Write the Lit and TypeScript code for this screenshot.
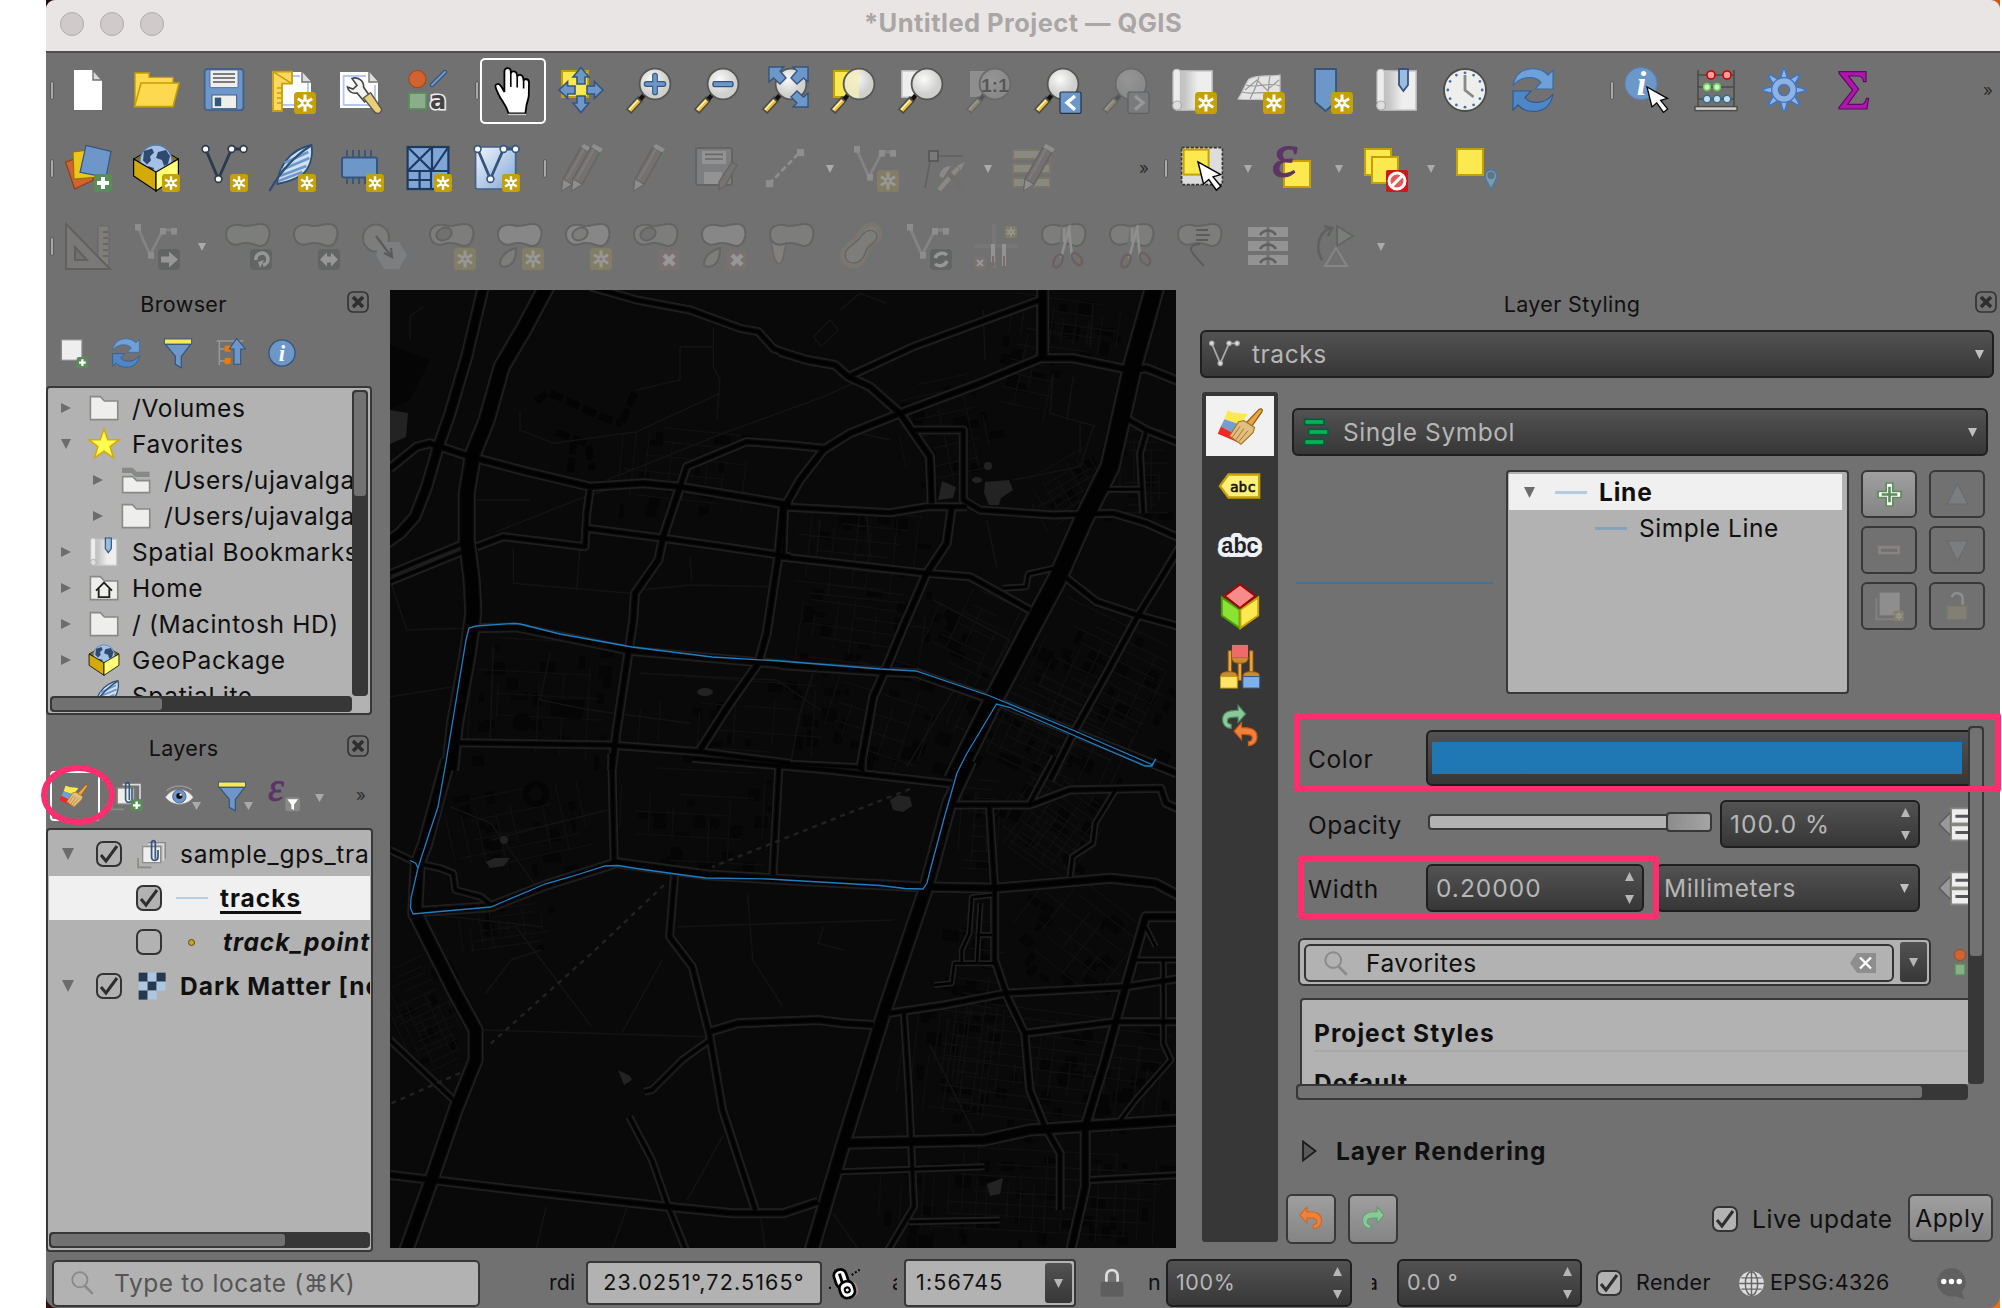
import { LitElement, html, css, svg } from "lit";
import { customElement } from "lit/decorators.js";
import { classMap } from "lit/directives/class-map.js";

/* ---------- icon parts, drawn on a 24 unit grid ---------- */

const star = (x = 13, s = 11) => svg`
  <g transform="translate(${x} ${x}) scale(${s / 11})">
    <rect width="11" height="11" rx="1.8" fill="#c4a000"/>
    <path d="M5.5 1.300v8.400M1.900 3.400l7.200 4.200M9.100 3.400L1.900 7.600" stroke="#fff" stroke-width="1.500"/>
    <circle cx="5.500" cy="5.500" r="1.900" fill="#fff"/><circle cx="5.500" cy="5.500" r=".8" fill="#c4a000"/>
  </g>`;
const plusBadge = svg`<rect x="15" y="15" width="9" height="9" rx="1.800" fill="#5a8c5a"/><path d="M19.500 16.500v6M16.500 19.500h6" stroke="#fff" stroke-width="2"/>`;
const greyBadge = (inner: unknown) => svg`<rect x="13" y="13.500" width="11" height="10.500" rx="2" fill="#3c4248"/>${inner}`;
const redBadge = svg`<rect x="13.500" y="14" width="10" height="10" rx="1.500" fill="#b06a6a"/><path d="M16 16.500l5 5M21 16.500l-5 5" stroke="#fff" stroke-width="2.200"/>`;
const lens = svg`
  <path d="M1.800 22.800l6-6.600" stroke="#4a4a46" stroke-width="3.600"/>
  <path d="M2.300 22.200l4.600-5" stroke="#fcc12f" stroke-width="2.100"/>
  <path d="M2 21.900l4.400-4.800" stroke="#fff" stroke-width=".6"/>
  <path d="M7.600 16.600l2.600-2.800" stroke="#111" stroke-width="2.200"/>
  <circle cx="15" cy="9" r="7.700" fill="url(#lens)" stroke="#555753" stroke-width=".9"/>`;
const globe = svg`
  <circle cx="12" cy="8.600" r="8" fill="#a4c2e6" stroke="#5a80ae" stroke-width=".6"/>
  <path d="M6 3.500l4-1.300 1 2-2 2 .5 2-2 2-2-2zM13 4l4-1 2 3-1 4-2 1-1-3-3-1zM8 11l3 1-1 3z" fill="#2f4a6e"/>`;
const blob = (fill = "#9aa590") => svg`<path d="M1 6C1 2 5 1 8 1.500c4 1.500 7-.8 11-.5C23 1.500 23.500 6 22 9c-1 3-3.500 3.500-6 2.500-3-1.200-5-1.500-8-.5C4 12.200 1 10 1 6z" fill="${fill}" stroke="#3e433c" stroke-width="1"/>`;
const vline = (c: string, d = "#fff") => svg`
  <path d="M2.800 2.500l6.400 15 6.600-15h6" fill="none" stroke="${c}" stroke-width="1.400"/>
  ${[[2.800, 2.500], [9.200, 17.500], [15.800, 2.500], [21.800, 2.500]].map(([x, y]) => svg`<circle cx="${x}" cy="${y}" r="1.700" fill="${d}" stroke="${c}" stroke-width=".8"/>`)}`;
const vsq = svg`
  <path d="M3 3l6 13.500 6.500-12.500h6" fill="none" stroke="#b4bbad" stroke-width="1.400"/>
  ${[[1.500, 1], [8, 15], [14, 3], [19.500, 3]].map(([x, y]) => svg`<rect x="${x}" y="${y}" width="3" height="3.300" fill="#dadada"/>`)}`;
const pencil = (x: number) => svg`<g transform="translate(${x} 0)"><path d="M3 17.500L12 1.500l4.500 2.500-9 16.200L2.500 23z" fill="#857268" stroke="#4e4740" stroke-width=".8"/><path d="M5 17.500l8.500-15" stroke="#a89a8c" stroke-width="1"/><path d="M3 17.500l4.500 2.700L2.300 23.500z" fill="#ddd" stroke="#444" stroke-width=".5"/><path d="M12 1.500L13.500 0l4.500 2.500-1.500 1.800z" fill="#ddd"/></g>`;
const scroll = svg`
  <path d="M5 2.500h16.500v19.500H4z" fill="url(#paper)" stroke="#c8c8c8" stroke-width=".8"/>
  <path d="M2 3.500C2 1 5.700 1 5.700 3.500v14.500H2z" fill="#ececec" stroke="#c0c0c0" stroke-width=".6"/>
  <ellipse cx="4" cy="19.800" rx="2.200" ry="2.300" fill="#dedede" stroke="#aaa" stroke-width=".6"/>`;
const page = svg`<path d="M5 2h9.500l4.500 5v15H5z" fill="#fff"/>`;
const scissors = svg`<path d="M12 3v7M15 1.500L10.500 18M14.500 2.500L16 18" stroke="#ddd" stroke-width="1.300"/><ellipse cx="9" cy="19.500" rx="2" ry="3.500" transform="rotate(25 9 19.500)" fill="none" stroke="#7e2e2e" stroke-width="1.200"/><ellipse cx="18.500" cy="18.500" rx="2" ry="3.500" transform="rotate(-35 18.500 18.500)" fill="none" stroke="#7e2e2e" stroke-width="1.200"/>`;
const pointer = (x: number, y: number, k = 1) => svg`<path transform="translate(${x} ${y}) scale(${k})" d="M0 0l2.700 10.800 2.600-2.200 3.700 5.200 2.200-1.900-3.800-4.600 3.700-1.100z" fill="#fff" stroke="#000" stroke-width=".7"/>`;
const brushPaint = svg`
  <path d="M5.500 3.800C9 6 12 4.800 16 6l-4 5.200-8.200-2.700z" fill="#fce94f"/>
  <path d="M3.800 8.500l8.200 2.700-3.500 4.500L2 12.300z" fill="#729fcf"/>
  <path d="M2 12.300l6.500 3.400L12 21 .4 16z" fill="#ef2929"/>
  <path d="M15.300 10.300L21.800 3.500c1-1 2.300-.2 1.700 1L18 12.300z" fill="#e9a648" stroke="#8f5902" stroke-width=".6"/>
  <path d="M11.300 9.800l2.800-.6 5.500 3.600-.8 2.700-6.300 6-6-4.300z" fill="#e0bd80" stroke="#a8741f" stroke-width=".6"/>
  <path d="M12 12.200l-4 5.600M14 13.400l-4 5.600M16.200 14.500l-4.700 5.500" stroke="#a8741f" stroke-width=".5"/>`;
const undoArrow = svg`<path d="M1.500 9.500L8 2v4.500c8-.5 13.500 1.500 13.500 8 0 4.500-3 7.500-7.500 7.500v-3.500c2 0 3.300-1.500 3.300-3.300 0-2.500-3.300-3.200-9.300-2.900V17z"/>`;
const cubeBox = svg`
  <path d="M.8 7.500L12 1l11.200 6.500L12 14z" fill="#8a6d08" stroke="#000" stroke-width=".5"/>
  ${globe}
  <path d="M.8 7.500L12 14v9.500L.8 16z" fill="#d4a90a" stroke="#000" stroke-width=".6"/>
  <path d="M23.200 7.500L12 14v9.500L23.200 16z" fill="#ffff78" stroke="#000" stroke-width=".6"/>`;
const feather = svg`
  <path d="M22.500 .5c1 5-.5 12-5 15-3 2-7 3.500-12 4.500C6 12 11 3 22.500.5z" fill="#cfe0f4" stroke="#2d4d74" stroke-width=".9"/>
  <path d="M21 4L9 9.500M21.500 7L7.500 13M20 11L6.800 16M18 14L6 18.500" stroke="#6d97c8" stroke-width="1.300"/>
  <path d="M22 1C14 6 7 14 1.500 23.500" fill="none" stroke="#2d4d74" stroke-width="1.100"/>`;
const funnel = svg`<path d="M2.500 5.500h19l-7 9V23l-4.500-2.500v-6z" fill="#6d97c8" stroke="#34557e" stroke-width=".9"/><rect x="1.800" y="1.500" width="20.400" height="3.800" fill="#fce94f" stroke="#34557e" stroke-width=".7"/>`;
const folderPath = "M1.800 3.500h7.500l3 3.200h10v14H1.800z";

const ICONS: Record<string, unknown> = {
  new: svg`${page}<path d="M14.500 2v5H19z" fill="#d8d8d8" stroke="#717171" stroke-width=".7"/>`,
  open: svg`<path d="M1.500 20V3.500h7v2.200h12V9" fill="#fcd94f" stroke="#c4a000" stroke-width=".7"/><path d="M1.300 20.300L4.500 8.500h19L20.500 20.300z" fill="#fcd94f" stroke="#c4a000" stroke-width=".8"/>`,
  save: svg`<rect x="2.300" y="1.500" width="19.400" height="20.600" rx="1.500" fill="#6d97c8" stroke="#41608a" stroke-width=".9"/><rect x="5" y="2" width="14" height="8.800" rx=".6" fill="#eeeeec" stroke="#41608a" stroke-width=".4"/><path d="M6.500 4h11M6.500 6h11M6.500 8h11" stroke="#555" stroke-width=".7"/><rect x="6" y="14.500" width="12.300" height="6.800" fill="#eeeeec" stroke="#41608a" stroke-width=".5"/><rect x="7.400" y="15.800" width="3.200" height="4.300" fill="#34557e"/>`,
  layout: svg`<path d="M2 3h15l4.500 5v13H2z" fill="#fff"/><path d="M17 3v5h4.500" fill="#ddd" stroke="#717171" stroke-width=".7"/><path d="M3.500 5H16M20 8.500V19.500H6" stroke="#b3c7ef" fill="none" stroke-width=".9"/><path d="M2.500 2.800H12v6H7V22.500H2.500z" fill="#fcd862" stroke="#c4a000" stroke-width=".9"/><path d="M2.500 2.800l9.500 6M7 11H4.500M7 13.500H4.500M7 16H4.500M7 18.500H4.500" stroke="#c4a000" stroke-width=".7"/>${star()}`,
  wrench: svg`<path d="M2 3h14.500l4.500 5v13H2z" fill="#fff"/><path d="M16.500 3v5H21" fill="#ddd" stroke="#717171" stroke-width=".7"/><path d="M15 5H3.800v14.500h15.700V9.500" stroke="#b3c7ef" fill="none" stroke-width=".9"/><path d="M8 6.200c3-.9 6 1 5.800 4.400l3.500 5-3 2.400-3.800-4.500C8 14 6 12.500 5.700 10.500l2.800 1 2-1.800z" fill="#f3f3f1" stroke="#444" stroke-width=".8"/><path d="M13.700 16l3.600-2.600 5.400 8c.6 1.700-1.800 3-3.200 1.800z" fill="#e9cf75" stroke="#555" stroke-width=".7"/>`,
  style: svg`<circle cx="6.700" cy="6.500" r="4.300" fill="#d0632f" stroke="#a34a1d" stroke-width=".6"/><path d="M14 9.500L20.500 3" stroke="#2d4d74" stroke-width="2.200" stroke-linecap="round"/><path d="M14 9.500L20.500 3" stroke="#6d97c8" stroke-width="1.200" stroke-linecap="round"/><rect x="2.500" y="13.500" width="8.600" height="8" fill="#8aae8a" stroke="#5a8c5a" stroke-width=".9"/><text x="13" y="21.500" font-family="DejaVu Sans" font-weight="bold" font-size="12" fill="#444" stroke="#eee" stroke-width="1.600" paint-order="stroke">a</text>`,
  hand: svg`<path d="M9.300.6c1 0 1.600.7 1.600 1.600v1c.2-.8.8-1 1.400-1 .9 0 1.500.6 1.700 1.600l.1 1c.3-.7.8-.9 1.300-.9.9 0 1.500.6 1.700 1.600l.2 1.300c.2-.6.7-.8 1.200-.8.9.1 1.500.8 1.500 1.800l-.1 6.500c-.2 2-.7 3-1.100 4.500l-.6 4.400H9.800c-1-3.500-2.300-5-4-7.600C4.600 13.400 3.300 11 3.200 9.500c0-1.100 1.700-1.400 2.400-.4.9 1 1.500 2.300 2.100 3.400V2.200C7.700 1.200 8.400.6 9.300.6z" fill="#fff" stroke="#000" stroke-width=".9"/><path d="M10.900 3v7M14.100 4.800v5.500M17.300 6.800v4" stroke="#000" stroke-width=".8"/><path d="M9.500 23.700h9" stroke="#ccc" stroke-width=".7"/>`,
  pan: svg`<rect x="2.500" y="2.500" width="13" height="13" fill="#fce94f" stroke="#c4a000" stroke-width="1"/><path d="M12 .8l4 4.700h-2v3.500h-4V5.500H8zM12 23.200l4-4.700h-2V15h-4v3.500H8zM1 12l4.300-4.200v2.200H9v4H5.300v2.200zM23 12l-4.300-4.200v2.200H15v4h3.700v2.200z" fill="#6d97c8" stroke="#34557e" stroke-width=".8"/>`,
  zin: svg`${lens}<path d="M15 4.800v8.400M10.800 9h8.400" stroke="#34557e" stroke-width="2.900" stroke-linecap="round"/><path d="M15 4.800v8.400M10.800 9h8.400" stroke="#6d97c8" stroke-width="1.800" stroke-linecap="round"/>`,
  zout: svg`${lens}<rect x="10" y="7.800" width="10" height="2.500" rx=".8" fill="#6d97c8" stroke="#34557e" stroke-width=".7"/>`,
  zfull: svg`${lens}<path d="M4 .5h7.500L9.500 2.500l3 3.500-3 3-3.300-3L4 8zM23.500.5V8l-2.200-2-3.300 3-3-3 3-3.500-2-2zM23.500 20.500h-7.500l2-2-3-3 3-3 3.300 3 2.200-2z" fill="#6d97c8" stroke="#34557e" stroke-width=".7"/>`,
  zsel: svg`<rect x="2.500" y="2.500" width="13" height="13" fill="#fce94f" stroke="#c4a000" stroke-width="1"/>${lens}<path d="M15 2a7 7 0 0 0 0 14z" fill="#f3eeb8" opacity=".8"/>`,
  zlayer: svg`<rect x="2.500" y="2.500" width="13" height="13" fill="#eee" stroke="#ccc" stroke-width=".8"/>${lens}`,
  znative: svg`<rect x="2.500" y="2.500" width="13" height="13" fill="#ddd"/>${lens}<text x="15" y="12.800" text-anchor="middle" font-family="Liberation Sans" font-weight="bold" font-size="9.500" fill="#111">1:1</text>`,
  zlast: svg`${lens}<rect x="13.500" y="13" width="10.500" height="10.700" rx=".8" fill="#6d97c8" stroke="#234" stroke-width=".6"/><path d="M21 15l-4 3.400 4 3.400" fill="none" stroke="#fff" stroke-width="1.700"/>`,
  znext: svg`${lens}<rect x="13.500" y="13" width="10.500" height="10.700" rx=".8" fill="#8a98a4" stroke="#234" stroke-width=".6"/><path d="M17 15l4 3.400-4 3.400" fill="none" stroke="#fff" stroke-width="1.700"/>`,
  newmap: svg`${scroll}${star()}`,
  new3d: svg`<path d="M6 6.500C11 4 17 5.500 21.500 4.500v15.500C16 15 9 17.500.5 16.500 3 13 4 9 6 6.500z" fill="#e4e4e4" stroke="#c4c4c4" stroke-width=".6"/><path d="M4.500 9.500c6 2 12-2 17 .5M2.500 13c6 2 12-2 19 2.500M11 5.500C10 9 9 12 6.500 16.500M16.500 5c-1 4 0 7-2 11.500M4 12l6-5 5 5 6-5" stroke="#9a9a9a" stroke-width=".6" fill="none"/>${star()}`,
  newbm: svg`<path d="M5 1.500h10.500V18l-5.200 4.500L5 18z" fill="#6d97c8" stroke="#34557e" stroke-width=".9"/>${star()}`,
  bm: svg`${scroll}<path d="M13 1.500h4.500v8L15.200 12.500 13 9.500z" fill="#9bbbe0" stroke="#34557e" stroke-width=".9"/>`,
  clock: svg`<circle cx="12" cy="12" r="10.500" fill="#eeeeec" stroke="#4a4c48" stroke-width=".9"/>${Array.from({ length: 12 }, (_, i) => svg`<circle cx="12" cy="3.400" r=".7" fill="#3f6ea8" transform="rotate(${i * 30} 12 12)"/>`)}<path d="M12 4.500V12l4.300 3.500" fill="none" stroke="#888a85" stroke-width="1.400"/>`,
  refresh: svg`<path d="M2 10C3 4 7 1.300 12 1.300c3.500 0 6 1.500 7.500 3.200L22 2v9.500h-9l3-3.300C13.500 5 6 4.500 2 10z" fill="#6fa0d8" stroke="#3a6ba5" stroke-width=".6"/><path d="M22 14c-1 6-5 8.700-10 8.700-3.500 0-6-1.500-7.500-3.200L2 22v-9.500h9l-3 3.300c2.500 3.200 10 3.700 14-1.800z" fill="#4f86c6" stroke="#2c5a94" stroke-width=".6"/>`,
  identify: svg`<circle cx="8.500" cy="8.800" r="8" fill="#6d97c8" stroke="#5685be" stroke-width=".5"/><text x="8.700" y="14.500" text-anchor="middle" font-family="Liberation Serif" font-style="italic" font-weight="bold" font-size="17" fill="#fff">i</text>${pointer(11.500, 10.500, .92)}`,
  info: svg`<circle cx="12" cy="12" r="9.800" fill="#6d97c8" stroke="#34557e" stroke-width="1"/><text x="12" y="17.800" text-anchor="middle" font-family="Liberation Serif" font-style="italic" font-weight="bold" font-size="17" fill="#fff">i</text>`,
  abacus: svg`<path d="M3 2v18M21 2v18M3 4.500h18M3 10.500h18M3 16.500h18" stroke="#4a4c48" stroke-width=".8"/><rect x="1.500" y="20.300" width="21" height="2" fill="#ccc" stroke="#4a4c48" stroke-width=".7"/><g stroke-width=".8"><g fill="#f8a0a0" stroke="#c00"><circle cx="9.500" cy="4.500" r="2"/><circle cx="17.500" cy="4.500" r="2"/></g><g fill="#c8f8c0" stroke="#73c95d"><circle cx="7.500" cy="10.500" r="1.700"/><circle cx="12.500" cy="10.500" r="1.700"/></g><g fill="#bfe0f4" stroke="#3a6a8a"><circle cx="7.500" cy="16.500" r="1.900"/><circle cx="12.500" cy="16.500" r="1.900"/><circle cx="17.500" cy="16.500" r="1.900"/></g></g>`,
  gear: svg`${Array.from({ length: 8 }, (_, i) => svg`<path d="M12 1.200c1 1 1.500 4 1.800 6h-3.600c.3-2 .8-5 1.800-6z" fill="#8fb2e2" stroke="#3a78c8" stroke-width=".8" transform="rotate(${i * 45} 12 12)"/>`)}<circle cx="12" cy="12" r="4.500" fill="#717171" stroke="#3a78c8" stroke-width="4"/><circle cx="12" cy="12" r="4.500" fill="none" stroke="#8fb2e2" stroke-width="2.700"/>`,
  sigma: svg`<path d="M5.500 2.800H19v5h-1.200C17.500 5.500 16.500 5 15 5h-4.700l5 6.500-5.500 7.700H16c2 0 2.500-.8 3.300-3h1L19.500 21.500H5.500v-.8l6.800-8.700L5.500 3.600z" fill="#b015b0" stroke="#5e0a60" stroke-width=".6"/>`,
  datasrc: svg`<path d="M.8 9l9-3 5 12-9.500 4.500z" fill="#d0632f" stroke="#8f3d12" stroke-width=".6"/><path d="M4.500 4l12-1.500 1 14-12.500 1z" fill="#edc51f" stroke="#8f7600" stroke-width=".6"/><path d="M11 .7l12.500 3-2.500 13-13-2.500z" fill="#6d97c8" stroke="#34557e" stroke-width=".6"/>${plusBadge}`,
  geopkg: cubeBox,
  geopkgNew: svg`${cubeBox}${star(15, 9)}`,
  newshp: svg`${vline("#2a3a4e")}${star(15, 9)}`,
  feather,
  featherNew: svg`<g transform="translate(-.8 0)">${feather}</g>${star(15, 9)}`,
  chip: svg`<path d="M5.500 3v4M8.500 3v4M11.500 3v4M14.500 3v4M17.500 3v4M5.500 16v4M8.500 16v4M11.500 16v4M14.500 16v4" stroke="#34557e" stroke-width=".9"/><rect x="3" y="6.800" width="17.500" height="10" rx="1" fill="#6d97c8" stroke="#34557e" stroke-width="1"/>${star(15, 9)}`,
  mesh: svg`<rect x="1.800" y="1.500" width="20.400" height="21" fill="#7fa6d6" stroke="#1d3a60" stroke-width="1.100"/><path d="M1.800 13.500h20.400M14 1.500v12M1.800 1.500L14 13.500M14 1.500L1.800 13.500M22.200 1.500L14 13.500M13.500 13.500v9M7.800 13.500v9M1.800 18H14" stroke="#1d3a60" stroke-width="1.100"/>${star(15, 9)}`,
  virtual: svg`<rect x="1.800" y="1.500" width="20" height="21" rx="1" fill="url(#vg)" stroke="#41608a" stroke-width=".8"/>${vline("#34557e")}${star(15, 9)}`,
  pencils: svg`${pencil(0)}${pencil(5)}`,
  pencil: pencil(2),
  saveedit: svg`<rect x="1.500" y="2" width="18" height="18.500" rx="1" fill="#9aa3ad" stroke="#444"/><rect x="4.500" y="3.500" width="12" height="6.500" fill="#eee"/><path d="M6 5.200h9M6 7.500h9" stroke="#555" stroke-width=".8"/><rect x="5.500" y="14" width="9" height="6" fill="#eee"/><path d="M13 19l6.500-10 2.500 1.500-6 10.500-3 2z" fill="#8d7a6e" stroke="#4e4740" stroke-width=".7"/>`,
  digit: svg`<path d="M4 20L19.500 4" stroke="#ddd" stroke-width="1.300" stroke-dasharray="3 1.500"/><rect x="2.500" y="18" width="3.600" height="3.600" fill="#ddd"/><rect x="18" y="2.500" width="3.600" height="3.600" fill="#ddd"/>`,
  vertexnew: svg`${vsq}${star()}`,
  advdig: svg`<path d="M7 6h15M3 22L6 6" stroke="#333" stroke-width=".8"/><rect x="5" y="3.500" width="4.500" height="5" fill="#999" stroke="#222"/><path d="M10 23L19.500 12" stroke="#d8c998" stroke-width="2.200"/><path d="M14 14l8.500 8.500" stroke="#776a4a" stroke-width="2.600"/><path d="M10 16c1-3.500 3-5 6-5l-4 6zM19 11l4-2-2 4z" fill="#ccc"/>`,
  tableedit: svg`<rect x="2" y="3" width="18.500" height="4.500" fill="#cfc79a" stroke="#a08a2a"/><rect x="2" y="10" width="18.500" height="4.500" fill="#cfc79a" stroke="#a08a2a"/><rect x="2" y="17" width="18.500" height="4.500" fill="#cfc79a" stroke="#a08a2a"/>${pencil(5)}`,
  select: svg`<rect x="1.800" y="1.800" width="20.400" height="18.500" fill="#ddd" stroke="#333" stroke-width=".8" stroke-dasharray="1.500 .8"/><rect x="2.800" y="2.800" width="12.500" height="12.500" fill="#fce94f" stroke="#c4a000" stroke-width="1"/>${pointer(10, 9, 1.020)}`,
  epsel: svg`<rect x="7.500" y="8.500" width="13" height="13" fill="#fce94f" stroke="#c4a000" stroke-width="1"/><text x="1.500" y="16" font-family="Liberation Serif" font-style="italic" font-size="32" fill="#5c3566" stroke="#5c3566" stroke-width=".5">ε</text>`,
  desel: svg`<rect x="2" y="2.500" width="13" height="13" fill="#fce94f" stroke="#c4a000"/><rect x="5.500" y="6.500" width="13" height="13" fill="#fce94f" stroke="#c4a000"/><rect x="12.500" y="13" width="11" height="11" rx=".8" fill="#d01818"/><circle cx="18" cy="18.500" r="4" fill="#e05a5a" stroke="#fff" stroke-width="1.500"/><path d="M15.200 21.300l5.600-5.600" stroke="#fff" stroke-width="1.500"/>`,
  selloc: svg`<rect x="2" y="2.500" width="13" height="13" fill="#fce94f" stroke="#c4a000"/><path d="M19 23c-1-3-3-4.500-3-7.200a3 3 0 0 1 6 0c0 2.700-2 4.200-3 7.200z" fill="#7a98ae" stroke="#4c7a98" stroke-width=".8"/><circle cx="19" cy="15.700" r="1.500" fill="#717171" stroke="#4c7a98" stroke-width=".6"/>`,
  cad: svg`<path d="M17 2h5.500v19.500H17z" fill="#a8a18c" stroke="#555" stroke-width=".6"/><path d="M1 1l22 22.500H1z" fill="#a08e80" stroke="#3c3530"/><path d="M5.500 12.500l6 6.500h-6z" fill="#717171" stroke="#3c3530"/><path d="M22 5h-2.500M22 8h-2.500M22 11h-2.500M22 14h-2.500M22 17h-2.500" stroke="#333" stroke-width=".7"/>`,
  move: svg`${vsq}${greyBadge(svg`<path d="M14.500 17.300h4v-2.500l4.500 4-4.500 4v-2.500h-4z" fill="#fff"/>`)}`,
  rotate: svg`${blob()}${greyBadge(svg`<path d="M16 19a3 3 0 1 1 3.500 2.500" fill="none" stroke="#fff" stroke-width="1.800"/><path d="M20 19l-2 4-1-3z" fill="#fff"/>`)}`,
  scale: svg`${blob()}${greyBadge(svg`<path d="M14 18.700l3.500-3.500v2h2v-2l3.500 3.500-3.500 3.500v-2h-2v2z" fill="#fff"/>`)}`,
  simplify: svg`<ellipse cx="8" cy="8" rx="6.500" ry="6.800" fill="#9aa590" stroke="#3e433c"/><path d="M10 10h9.500l4 6.500-4 7H12l-4-7z" fill="#9aa4b0"/><path d="M8 7l7.500 10m-3.500-1.500l4 2-.5-4.500" fill="none" stroke="#222" stroke-width="1.100"/>`,
  ring: svg`${blob()}<ellipse cx="8" cy="6" rx="4" ry="3" fill="#717171" stroke="#3e433c" transform="rotate(-25 8 6)"/>${star()}`,
  part: svg`${blob("#c4c4c4")}<path d="M2 21c0-4 4-7 8-8 0 4-1 8-4 9-2 .6-4 .5-4-1z" fill="#9aa590" stroke="#3e433c"/>${star()}`,
  fill: svg`${blob("#c4c4c4")}<ellipse cx="8" cy="6" rx="4" ry="3" fill="#9aa590" stroke="#3e433c" transform="rotate(-25 8 6)"/>${star()}`,
  delring: svg`${blob()}<ellipse cx="8" cy="6" rx="4" ry="3" fill="#717171" stroke="#3e433c" transform="rotate(-25 8 6)"/>${redBadge}`,
  delpart: svg`${blob("#c4c4c4")}<path d="M2 21c0-4 4-7 8-8 0 4-1 8-4 9-2 .6-4 .5-4-1z" fill="#9aa590" stroke="#3e433c"/>${redBadge}`,
  reshape: svg`<path d="M1 8c2 6 1 12 5 13 3-3 1-8 4-11" fill="#b0a888" stroke="#555" stroke-width=".8"/>${blob()}`,
  offset: svg`<path d="M13 4c3-4 9-3 9 2 0 4-5 4-6 7-1 4-3 9-7 9-5 0-7-4-5-8 3-4 6-4 9-10z" fill="#9aa590" stroke="#a08a4a" stroke-width="2.200"/><path d="M13.500 6c3-3 7-2 7 1.500 0 3-4.500 4-5.500 7-1 3-3 6-6 6-4 0-5-3-4-6 3-4 6-4 8.500-8.500z" fill="none" stroke="#444" stroke-width=".7"/>`,
  offline: svg`${vsq}${greyBadge(svg`<path d="M15.500 18c1-2.500 4-3 6-1.500M21.500 19.500c-1 2.500-4 3-6 1.500" stroke="#fff" stroke-width="1.700" fill="none"/>`)}`,
  trim: svg`<path d="M1 12h22M11 1v22" stroke="#8a8a8a" stroke-width="1.800"/><path d="M10.500 11v9M16 11v11" stroke="#eee" stroke-width="2"/><path d="M10.500 17v5M16 17v6" stroke="#a55" stroke-width="1"/><rect x="1" y="17.500" width="6" height="6" rx="1" fill="#b06a6a"/><path d="M2.500 19l3 3M5.500 19l-3 3" stroke="#fff"/><g transform="translate(2.500 -12)">${star(14, 6)}</g>`,
  split: svg`${blob()}<path d="M11 0l-1.500 13h4z" fill="#717171"/>${scissors}`,
  merge: svg`${blob()}<path d="M10 4h6M10 6.500h7M10 9h6M8 15c-2-3 2-4 4-4M8 15c2 3 4 5 6 7" fill="none" stroke="#222" stroke-width="1"/>`,
  mergeattr: svg`<g fill="#eee"><path d="M2 2.500h20v5H2zM2 9.500h20v5H2zM2 16.500h20v5H2z"/></g><path d="M12 1v22" stroke="#717171" stroke-width="1.500"/><path d="M8 6.500c2-3 6-3 8 0M8 13.500c2-3 6-3 8 0M8 20.500c2-3 6-3 8 0" fill="none" stroke="#333" stroke-width="1.200"/>`,
  rotpt: svg`<path d="M12.500 2l8 5-8 5z" fill="#8fa088" stroke="#3e433c"/><path d="M12 13l5.500 9h-11z" fill="none" stroke="#bbb"/><path d="M5 19C1 12 4 5 9 3M6 2l4 1-2 4" fill="none" stroke="#333" stroke-width="1.300"/>`,
  addsel: svg`<rect x="2.500" y="2" width="15.500" height="15.500" fill="#eee" stroke="#888a85" stroke-width="1"/><rect x="14" y="15" width="8.500" height="8.500" rx="1.500" fill="#5a8c5a"/><path d="M18.300 16.700v5M15.800 19.200h5" stroke="#fff" stroke-width="1.700"/>`,
  funnel,
  collapse: svg`<path d="M4 3v18M2 3h20M4 9h4M4 18h5" stroke="#999" stroke-width="1.100"/><rect x="8" y="6.500" width="4.500" height="4.500" fill="#f57900"/><rect x="8" y="15.700" width="4.500" height="4.500" fill="#f57900"/><path d="M17 1l6.500 8H20v11.500h-5V9h-3.500z" fill="#6d97c8" stroke="#34557e" stroke-width=".8"/>`,
  folder: svg`<path d="${folderPath}" fill="#eeeeec" stroke="#888a85" stroke-width="1.200"/>`,
  folderopen: svg`<path d="M1.500 2.800h8l3 3h9.700v4H11.500l-3-3H1.500z" fill="#888a85"/><path d="M2 9.500h7.500l3 3h9.700v9H2z" fill="#eeeeec" stroke="#888a85" stroke-width="1.200"/>`,
  starfav: svg`<path d="M12 .8l2.900 8h8.500l-6.800 5.100 2.500 8.500L12 17.500l-7.100 4.900 2.500-8.500L.6 8.800h8.500z" fill="#ffff50" stroke="#d4a90a" stroke-width="1.200"/>`,
  home: svg`<path d="${folderPath}" fill="#eeeeec" stroke="#888a85" stroke-width="1.200"/><path d="M6 14l6-6 6 6M8 12.500v6.300h8v-6.300" fill="none" stroke="#222" stroke-width="1.400"/>`,
  brush: brushPaint,
  group: svg`<path d="M1.500 15v7h10" fill="none" stroke="#888a85" stroke-width="1.200"/><path d="M9 3.500h13v12" fill="none" stroke="#888a85" stroke-width="1"/><rect x="5" y="6.500" width="13.500" height="12" fill="#eeeeec" stroke="#888a85" stroke-width=".9"/><path d="M9 4.700h11.500V17" fill="none" stroke="#ddd" stroke-width="1.200"/><path d="M14.500 15.500V3.500c0-2-2.800-2-2.800 0v11c0 3.200 4.800 3 4.800-.2V9" fill="none" stroke="#34557e" stroke-width="1.300"/>`,
  addgroup: svg`<path d="M0 15v7h9" fill="none" stroke="#888a85" stroke-width="1.200"/><rect x="4" y="6" width="12.500" height="12" fill="#eeeeec" stroke="#888a85"/><path d="M8 3.500h13v11" fill="none" stroke="#ddd" stroke-width="1.200"/><path d="M13 15V3.500c0-2-2.800-2-2.800 0v11c0 3 4.800 3 4.800-.2V6" fill="none" stroke="#34557e" stroke-width="1.200"/><rect x="14" y="14.500" width="9" height="9" rx="1.500" fill="#5a8c5a"/><path d="M18.500 16.200v5.600M15.700 19h5.600" stroke="#fff" stroke-width="1.800"/>`,
  eye: svg`<path d="M1 13c5-8 16-8 21 0-5 7-16 7-21 0z" fill="#eeeeec" stroke="#888" stroke-width=".7"/><circle cx="11.500" cy="12.300" r="5" fill="#6d97c8" stroke="#34557e" stroke-width=".6"/><circle cx="11.500" cy="12" r="2.300" fill="#111"/><circle cx="12.500" cy="11" r=".9" fill="#fff"/><path d="M2 8C7 3.500 16 3.500 21 7.500" fill="none" stroke="#9a9a9a" stroke-width="1"/>`,
  epsfilter: svg`<text x="0" y="15.500" font-family="Liberation Serif" font-style="italic" font-size="30" fill="#5c3566" stroke="#5c3566" stroke-width=".6">ε</text><rect x="13" y="13" width="11" height="10.500" rx="1.500" fill="#888a85"/><path d="M14.500 14.500h8l-3 4v4l-2-1v-3z" fill="#fff"/>`,
  checker: svg`${Array.from({ length: 9 }, (_, i) => i === 8 ? null : svg`<rect x="${2 + (i % 3) * 6.700}" y="${2 + Math.floor(i / 3) * 6.700}" width="6.800" height="6.800" fill="${i % 2 ? "#adc6e2" : "#24384e"}"/>`)}`,
  singlesym: svg`<g fill="#06b354" stroke="#055c3c" stroke-width="1.200"><rect x="2" y="2.500" width="14.500" height="4"/><rect x="5" y="10" width="14.500" height="4"/><rect x="2" y="17.500" width="14.500" height="4"/></g>`,
  label: svg`<path d="M6 6h16v12H6l-4.500-6z" fill="#fff07a" stroke="#c4a000" stroke-width="1.200"/><text x="13.500" y="15" text-anchor="middle" font-family="DejaVu Sans Mono" font-size="7.500" fill="#111" stroke="#111" stroke-width=".3">abc</text>`,
  mask: svg`<text x="12" y="15.800" text-anchor="middle" font-family="Liberation Sans" font-weight="bold" font-size="11.300" fill="#222" stroke="#eef1fa" stroke-width="4.200" stroke-linejoin="round" paint-order="stroke">abc</text>`,
  cube: svg`<path d="M2.500 7.500l9.300 6.500v9.500L2.500 17z" fill="#8ae234" stroke="#4e9a06"/><path d="M21.500 7.500l-9.300 6.500v9.500l9.300-6.500z" fill="#fce94f" stroke="#c4a000"/><path d="M12 .8l8 6-8 6.200-8-6.200z" fill="#f78a8a" stroke="#a40000"/>`,
  brushes: svg`<g stroke="#8f5902" stroke-width=".5"><path d="M5.800 4h1.800v12H5.800zM17 4h1.800v12H17zM11 10h1.800v9.500H11z" fill="#e9a648"/><path d="M1.800 17.500c0-2.500 2.500-2.500 4.400-2.500s4.400 0 4.400 2.500zM13.500 17.500c0-2.500 2.500-2.500 4.300-2.500s4.500 0 4.500 2.500zM7.700 7.500h8.600c0 3-2.500 3-4.300 3s-4.300 0-4.300-3z" fill="#c98a34"/></g><rect x="7.800" y="1" width="8.400" height="6.600" fill="#ef6a6a"/><rect x="1.800" y="17.500" width="8.800" height="6" fill="#fce36a" stroke="#c4a000" stroke-width=".5"/><rect x="13.500" y="17.500" width="8.800" height="6" fill="#7fb0ea" stroke="#34557e" stroke-width=".5"/>`,
  history: svg`<g transform="translate(15.800 0) scale(-.6 .6)" fill="#8cc79a" stroke="#4a8f5c">${undoArrow}</g><g transform="translate(8 9) scale(.6)" fill="#f0803a" stroke="#c85a14">${undoArrow}</g>`,
  undo: svg`<g transform="translate(3 2) scale(.76)" fill="#ee8238" stroke="#d0661f">${undoArrow}</g>`,
  redo: svg`<g transform="translate(21 2) scale(-.76 .76)" fill="#8cc79a" stroke="#5d9f6c">${undoArrow}</g>`,
  plus: svg`<path d="M9.300 2.500h5.400v7h6.800v5h-6.800v7H9.300v-7H2.500v-5h6.800z" fill="#fff" stroke="#5a8c5a" stroke-width="1.400"/><path d="M12 5.500v13M5.500 12h13" stroke="#5a8c5a" stroke-width="2.200"/>`,
  minus: svg`<rect x="2.500" y="8" width="19" height="8" fill="#c9b4b4" stroke="#8b6a6a" stroke-width="1.200"/><rect x="5.500" y="11" width="13" height="2.500" fill="#8b6a6a"/>`,
  up: svg`<path d="M12 3l8.500 17h-17z" fill="#8fa3b0" stroke="#51606c"/>`,
  down: svg`<path d="M12 21L3.500 4h17z" fill="#8fa3b0" stroke="#51606c"/>`,
  dup: svg`<path d="M2.500 6v16h14" fill="none" stroke="#aaa" stroke-width="1.500"/><rect x="5" y="2" width="15" height="17" fill="#ddd"/><g transform="translate(2 2)">${star(13.500, 8)}</g>`,
  lockopen: svg`<rect x="4" y="12" width="16" height="11" fill="#b9aa6a" stroke="#8a7d48"/><path d="M8 5c1-5 8.500-4 8.500 1v5" fill="none" stroke="#ddd" stroke-width="2"/>`,
  search: svg`<circle cx="10" cy="9" r="7" fill="none" stroke="#8a8a8a" stroke-width="1.700"/><path d="M14.500 14.500l7.500 7.500" stroke="#8a8a8a" stroke-width="2.400"/>`,
  lock: svg`<path d="M7.500 12V6.500c0-6.500 9-6.500 9 0V12" fill="none" stroke="#ddd" stroke-width="2.200"/><rect x="3" y="11" width="18" height="12" rx="1" fill="#5e5e5e"/>`,
  mouse: svg`<g transform="rotate(-18 12 12)"><rect x="9" y="12" width="11" height="12" rx="5" fill="#a08a8a"/><rect x="5.500" y="1" width="9.500" height="14" rx="4.500" fill="#fff" stroke="#000" stroke-width="2"/><path d="M10.200 4v7" stroke="#000" stroke-width="2.200"/><rect x="6.500" y="11" width="11" height="12.500" rx="5" fill="#fff" stroke="#000" stroke-width="2"/><circle cx="12" cy="17.500" r="1.900" fill="none" stroke="#000" stroke-width="1.500"/></g><path d="M17 6l6-4M0 15.500l3 .5" stroke="#000" stroke-width="1.500" stroke-dasharray="1.500 1.500"/>`,
  globewire: svg`<circle cx="12" cy="12" r="11" fill="#dedede"/><path d="M12 1v22M1 12h22M3 7h18M3 17h18" stroke="#666" stroke-width="1.300"/><ellipse cx="12" cy="12" rx="5.500" ry="10.500" fill="none" stroke="#666" stroke-width="1.300"/>`,
  bubble: svg`<circle cx="12" cy="11" r="11" fill="#606060"/><path d="M12 21l10 3-3-8z" fill="#606060"/><circle cx="6" cy="10.500" r="2.100" fill="#fff"/><circle cx="12" cy="10.500" r="2.100" fill="#fff"/><circle cx="18" cy="10.500" r="2.100" fill="#fff"/>`,
  override: svg`<path d="M9.500 4L1.500 12l8 8z" fill="#999" stroke="#555" stroke-width=".8"/><path d="M10 1h14v10.500H10zM10 13h14v10.500H10z" fill="#eee" stroke="#888a85" stroke-width="1.200"/><path d="M13 6.500h11M13 18h11" stroke="#555" stroke-width="2"/>`,
  vlayer: vline("#a5a5a5", "#ddd"),
};

const icon = (name: string, size = 48, cls = "") =>
  html`<svg class="ico ${cls}" width=${size} height=${size} viewBox="0 0 24 24">${ICONS[name]}</svg>`;
const tri = (dir: "up" | "down" | "right", w = 9, h = 9) => html`<svg class="tri" width=${w} height=${h} viewBox="0 0 10 10" preserveAspectRatio="none"><path d=${
  dir === "up" ? "M0 10L5 0l5 10z" : dir === "down" ? "M0 0h10L5 10z" : "M0 0l10 5L0 10z"}/></svg>`;
const check = (on: boolean) => html`<span class="check">${on ? html`<svg width="22" height="22" viewBox="0 0 22 22"><path d="M3 12l5 6L19 3" fill="none" stroke="#2e2e2e" stroke-width="3"/></svg>` : null}</span>`;
const closeBtn = html`<svg class="close" width="22" height="22" viewBox="0 0 22 22"><rect x="1" y="1" width="20" height="20" rx="5" fill="none" stroke="#343434" stroke-width="1.700"/><path d="M6 6l10 10M16 6L6 16" stroke="#2e2e2e" stroke-width="3.600"/></svg>`;

/* ---------- toolbars: [kind, name or width] ---------- */

type Item = [kind: "grip" | "on" | "off" | "active" | "arrow" | "more", value: string | number];
const on = (...n: string[]): Item[] => n.map((x) => ["on", x]);
const off = (...n: string[]): Item[] => n.map((x) => ["off", x]);
const BARS: Item[][] = [
  [["grip", 8], ...on("new", "open", "save", "layout", "wrench", "style"), ["grip", 17], ["active", "hand"],
    ...on("pan", "zin", "zout", "zfull", "zsel", "zlayer"), ...off("znative"), ...on("zlast"), ...off("znext"),
    ...on("newmap", "new3d", "newbm", "bm", "clock", "refresh"), ["grip", 47],
    ...on("identify", "abacus", "gear", "sigma"), ["more", 107]],
  [["grip", 8], ...on("datasrc", "geopkgNew", "newshp", "featherNew", "chip", "mesh", "virtual"), ["grip", 17],
    ...off("pencils", "pencil", "saveedit", "digit"), ["arrow", 22], ...off("vertexnew", "advdig"), ["arrow", 22],
    ...off("tableedit"), ["more", 82], ["grip", 19], ...on("select"), ["arrow", 23], ...on("epsel"), ["arrow", 24],
    ...on("desel"), ["arrow", 24], ...on("selloc")],
  [["grip", 8], ...off("cad", "move"), ["arrow", 24], ...off("rotate", "scale", "simplify", "ring", "part", "fill", "delring",
    "delpart", "reshape", "offset", "offline", "trim", "split", "split", "merge", "mergeattr", "rotpt"), ["arrow", 22]],
];

/* ---------- map ---------- */

type Tile = { ox: number; oy: number; sx: number; roads: [number, string][]; thin: string[] };
const TILES: Tile[] = [
  {
    ox: 390, oy: 280, sx: 1 / 3,
    roads: [
      [12, "285,0 230,230 180,400 145,500 110,620 75,710 30,760 -20,795"],
      [17, "480,0 400,150 335,260 290,420 250,520 230,640 230,780 245,900 250,1000 232,1130 195,1330 180,1470"],
      [9, "0,565 80,500 120,490 240,530 410,575 600,620 760,610 870,620 1020,645 1200,675"],
      [8, "600,20 740,60 900,90 1050,145 1105,155 1150,205 1200,225"],
      [8, "870,620 890,560 1070,485 1200,495 1300,505"],
      [9, "870,620 820,770 805,840 735,940 730,1020 715,1120 680,1350 665,1470"],
      [8, "600,630 590,700 585,800 340,770 260,800"],
      [8, "590,745 820,775 1000,800 1200,830"],
      [9, "1180,670 1165,830 1130,1060 1105,1150 1020,1270 930,1410"],
      [7, "0,880 120,830 220,790"], [7, "0,905 220,815"],
      [8, "205,1388 660,1395 930,1415 1200,1450"],
      [9, "245,1045 380,1042 720,1112 1200,1155"],
    ],
    thin: ["650,600 800,540 1000,460 1300,350 1390,310", "320,755 560,660 680,620", "390,390 390,450 490,490 740,455 990,340", "970,140 970,260 990,300 980,420", "740,330 870,300 870,200 970,200", "370,800 370,910 720,940", "750,930 900,915 1150,920", "0,900 50,1050 220,1045", "310,1100 300,1380", "480,1120 450,1260 600,1290 900,1330", "570,800 560,930", "0,1250 190,1220", "260,660 420,660", "60,180 60,110 100,80", "900,830 905,900", "750,1180 1160,1200 1290,1290"],
  },
  {
    ox: 780, oy: 280, sx: 1 / 3,
    roads: [
      [9, "0,215 80,240 165,255 205,290 270,320 360,400 450,530 455,670"],
      [8, "205,290 400,200 780,60"],
      [12, "788,0 788,235"],
      [9, "20,670 60,600 130,510 210,460 360,400 600,310 780,235 880,235 1050,270 1100,265 1200,305"],
      [20, "1130,0 1060,250 990,560 910,720 830,900 750,1050 640,1260 520,1500"],
      [8, "400,450 550,450 550,660 600,690 820,705 1000,700 1100,730 1200,775"],
      [8, "0,680 330,698 440,680 560,680"],
      [9, "515,680 500,790 440,880 370,1040 320,1160 280,1250 240,1470"],
      [8, "0,830 440,880 570,890 660,940 750,990"], [7, "15,680 10,825"],
      [6, "670,925 738,920 745,882 820,865"],
      [8, "860,895 950,965 1070,1005 1200,1040"],
      [8, "1200,800 1140,900 1075,1005 980,1180 880,1360 810,1500"],
      [8, "1030,410 1100,450 1200,490"], [7, "1100,450 1080,520 1090,700"], [6, "970,628 1090,628"],
      [9, "0,1155 310,1175 410,1180 640,1260 1190,1480"], [7, "0,1450 240,1462"],
    ],
    thin: ["820,280 810,400 950,440", "610,90 615,240", "900,430 900,520", "880,290 860,420", "100,170 150,120 175,150 125,200 100,170", "180,90 240,40 320,70", "940,70 930,200", "260,700 270,830", "120,720 110,830", "620,720 650,860", "100,1180 60,1300 30,1460", "460,960 690,1080 640,1170", "540,1200 380,1460", "200,450 330,480", "700,600 900,560 940,440"],
  },
  {
    ox: 390, oy: 760, sx: 0.5038,
    roads: [
      [15, "115,0 70,250 55,310 50,460 130,700 170,810 170,900 130,1050 80,1270 30,1480"],
      [10, "50,455 200,440 310,375 450,308 630,345 860,365 1050,380 1200,385 1430,355 1520,370 1570,410"],
      [8, "440,-20 445,310"], [8, "772,20 760,345"], [8, "600,-5 870,30 1115,72"], [7, "938,-20 938,35"],
      [15, "1150,0 1110,130 1065,380 980,760 900,1150 835,1480"],
      [8, "565,345 555,530 600,620 635,830 660,1050 725,1350"],
      [9, "635,815 690,790 850,780 900,790 960,795"],
      [7, "635,840 580,900 520,990 505,995"], [7, "475,1070 520,1200 550,1330 590,1480"],
      [9, "0,1245 250,1290 550,1340 680,1360 780,1360 850,1325"],
      [7, "0,840 130,1025"], [7, "0,270 55,310 100,325 125,340 130,390 180,410 205,440"],
      [8, "1120,135 1270,135 1350,90 1530,85 1540,130 1570,150"],
      [8, "1190,140 1200,385 1200,600 1225,710 1260,820 1270,990 1300,1100 1330,1180 1330,1350"],
      [7, "1270,130 1320,-10"], [6, "1440,90 1400,190 1395,250 1355,290 1350,350"],
      [8, "990,760 1100,735 1220,700 1460,680 1570,655"], [8, "1260,820 1440,785 1570,785"],
      [12, "900,1150 1180,1140 1270,1110 1570,1080"],
      [10, "1570,470 1500,470 1460,680 1420,900 1380,1100 1380,1280 1350,1480"],
      [7, "1020,760 1030,1000 1040,1340 985,1480"], [6, "895,1235 1180,1220"], [6, "1030,1385 1210,1380"],
      [7, "1390,1260 1570,1245"], [6, "1535,600 1535,850 1550,900 1480,1020 1450,1080"],
      [5, "1080,675 1115,670 1120,610 1200,610"], [5, "1195,405 1155,412 1150,520 1135,570 1135,610"],
      [5, "1172,430 1165,610"], [5, "1165,525 1195,525"], [5, "1500,500 1520,560"], [6, "1480,600 1570,600"],
    ],
    thin: ["120,140 200,190 300,400", "250,500 320,640 400,800", "60,460 300,500", "310,1340 290,1470", "470,1345 440,1470", "660,1130 590,1320", "180,810 630,830", "710,400 720,600 780,740", "540,600 460,820", "1070,850 1160,1120", "880,1360 930,1470", "900,570 850,550 860,500", "200,240 430,150", "1000,480 570,500", "735,1360 745,1470", "190,700 240,600 300,570"],
  },
];

const rng = (seed: number) => () => ((seed = (seed * 16807) % 2147483647) / 2147483647);

/* blocks of small streets: x, y, width, height, angle, spacing */
const BLOCKS = [
  [1010, 300, 110, 60, 8, 11], [620, 430, 130, 80, 6, 15], [790, 510, 130, 90, 6, 14], [800, 590, 130, 80, 8, 15],
  [930, 590, 80, 90, 25, 15], [1030, 620, 140, 130, 26, 12], [950, 690, 180, 90, 25, 12], [960, 780, 40, 90, 4, 11],
  [1000, 780, 100, 90, 35, 7], [1120, 430, 50, 90, 0, 10], [940, 920, 60, 200, 8, 12], [1020, 890, 120, 90, 38, 15],
  [900, 1010, 270, 120, 7, 11], [880, 1150, 290, 90, 3, 12], [830, 660, 110, 110, 18, 17], [620, 770, 150, 100, 3, 21],
  [450, 790, 140, 80, -12, 18], [470, 640, 140, 120, 3, 26], [640, 680, 190, 80, 4, 24], [394, 960, 60, 110, -25, 8],
  [460, 900, 90, 50, -8, 10], [1000, 330, 60, 90, 12, 13], [1030, 460, 80, 60, -30, 10], [900, 380, 90, 110, -12, 16],
];

@customElement("map-canvas")
class MapCanvas extends LitElement {
  static styles = css`
    :host { display: block; width: 786px; height: 958px; overflow: hidden; background: #090909; }
    svg { display: block; }
  `;
  private pts(t: Tile, s: string) {
    return s.split(" ").map((p) => {
      const [x, y] = p.split(",").map(Number);
      return `${(t.ox + x * t.sx).toFixed(1)},${(t.oy + y / 3).toFixed(1)}`;
    }).join(" ");
  }
  private small() {
    const r = rng(4711);
    const lines: string[] = [];
    const rects: unknown[] = [];
    for (const [x, y, w, h, a, s] of BLOCKS) {
      const rad = (a * Math.PI) / 180, c = Math.cos(rad), n = Math.sin(rad);
      const cx = x + w / 2, cy = y + h / 2;
      const at = (u: number, v: number) => `${(cx + u * c - v * n).toFixed(1)} ${(cy + u * n + v * c).toFixed(1)}`;
      for (let v = -h / 2; v < h / 2; v += s * (0.7 + r() * 0.7)) lines.push(`M${at(-w / 2 + r() * w * 0.4, v)}L${at(w / 2 - r() * w * 0.3, v)}`);
      for (let u = -w / 2; u < w / 2; u += s * (0.8 + r())) lines.push(`M${at(u, -h / 2 + r() * h * 0.5)}L${at(u, h / 2 - r() * h * 0.4)}`);
      for (let i = 0; i < (w * h) / 700; i++) {
        const u = (r() - 0.5) * w, v = (r() - 0.5) * h;
        rects.push(svg`<rect x="${(cx + u).toFixed(1)}" y="${(cy + v).toFixed(1)}" width="${(4 + r() * 12).toFixed(1)}" height="${(4 + r() * 10).toFixed(1)}" transform="rotate(${a} ${cx + u} ${cy + v})"/>`);
      }
    }
    return svg`<g fill="#050505">${rects}</g><path d="${lines.join("")}" fill="none" stroke="#101010" stroke-width="1.300"/>`;
  }
  render() {
    const roads = TILES.flatMap((t) => t.roads.map(([w, s]) => [w + 1, this.pts(t, s)] as [number, string]));
    const thin = TILES.flatMap((t) => t.thin.map((s) => this.pts(t, s)));
    return html`<svg width="786" height="958" viewBox="390 290 786 958">
      ${this.small()}
      <g fill="#050505"><path d="M390 345l40 15-20 40-20 10z"/><circle cx="522" cy="722" r="9"/><path d="M550 700l35 0-4 20-30-4z"/></g>
      <g fill="none" stroke="#040404" stroke-width="7" stroke-dasharray="14 4"><path d="M536 402l12-10 52 24 22 8M622 422l14-32M556 432l32 12 4 26M574 440l-4 34"/></g>
      <circle cx="536" cy="794" r="10" fill="none" stroke="#040404" stroke-width="6"/>
      <g fill="none" stroke="#131313" stroke-width="1.500">${thin.map((p) => svg`<polyline points="${p}"/>`)}</g>
      <g fill="none" stroke="#1f1f1f" stroke-linejoin="round">${roads.map(([w, p]) => svg`<polyline points="${p}" stroke-width="${w}"/>`)}</g>
      <g fill="none" stroke="#0b0b0b" stroke-linejoin="round">${roads.map(([w, p]) => svg`<polyline points="${p}" stroke-width="${w - 3.400}"/>`)}</g>
      <g fill="none" stroke="#020202" stroke-linejoin="round">${roads.map(([w, p]) => svg`<polyline points="${p}" stroke-width="${Math.max(w - 6, 2)}"/>`)}</g>
      <g fill="none" stroke="#222" stroke-width="2.400" stroke-dasharray="5 5"><path d="M910 789L712 867M664 885L592 953 488 1046M460 1073L390 1104"/></g>
      <g fill="#232323"><path d="M390 410l18 3-2 24-16 7z"/><ellipse cx="705" cy="692" rx="8" ry="4"/><path d="M942 481l14 6-3 11-15 2z"/><path d="M985 482l24-2 4 10-12 8-2 7h-10l-5-12z"/><circle cx="988" cy="466" r="4"/><ellipse cx="977" cy="480" rx="5" ry="3"/><path d="M890 800l8-5 12 2 2 9-9 6-10-2z"/><path d="M486 862l8-4 16 0-6 8-14 2z"/><path d="M618 1070l12 6 2 4-8 5z"/><path d="M987 1184l16-6-3 16-10 2z"/><circle cx="504" cy="840" r="4"/></g>
      <path d="M410 860.500L415.500 863 418 868 411 898 410.500 908 413 914 440 911.500 491 907 505 901 545 884 570 877 605 866 618 865.500 640 869 676 874 706 878 768 879 880 885.500 905 888.500 923 889 927 883 931 867 945 815 957 773 966 755 996.500 704 1010 707.500 1080 738 1145 766 1152 766 1155 760M1153 765L1075 731 990 696 916 671 880 669 780 661 712 657 632 647 560 634 520 624 513 623.500 476 626 469 628 466 640 446 762 438 807 427 840 418 868M1151 766L1156 759" fill="none" stroke="#1f7fc4" stroke-width="1.300"/>
    </svg>`;
  }
}

/* ---------- panels ---------- */

const BROWSER: [depth: number, state: string, icon: string, text: string][] = [
  [0, "right", "folder", "/Volumes"], [0, "down", "starfav", "Favorites"],
  [1, "right", "folderopen", "/Users/ujavalga"], [1, "right", "folder", "/Users/ujavalga"],
  [0, "right", "bm", "Spatial Bookmarks"], [0, "right", "home", "Home"], [0, "right", "folder", "/ (Macintosh HD)"],
  [0, "right", "geopkg", "GeoPackage"], [0, "", "feather", "SpatiaLite"],
];

@customElement("app-root")
class AppRoot extends LitElement {
  static styles = css`
    :host { display: block; position: relative; width: 2002px; height: 1308px; overflow: hidden; background: #fff;
      font-family: Inter, "DejaVu Sans", sans-serif; font-size: 24.5px; letter-spacing: .55px; color: #101010; line-height: 1; }
    * { box-sizing: border-box; }
    .defs { position: absolute; }
    svg text { letter-spacing: 0; }
    .backdrop { margin-left: 46px; width: 1954px; height: 1308px; background: linear-gradient(100deg, #2a0a0a, #8c2a06 70%, #f07010); }
    .window { width: 1954px; height: 1308px; display: flex; flex-direction: column; background: #717171; border-radius: 9px 9px 12px 12px; overflow: hidden; }
    .title { height: 53px; background: #e9e5e4; border-bottom: 2px solid #4c4e4d; display: grid; grid-template-columns: 130px 1fr 130px; align-items: center; padding: 0 0 4px 14px; }
    .lights { display: flex; gap: 16px; }
    .lights i { width: 24px; height: 24px; border-radius: 50%; background: #d0cbca; border: 1px solid #b0acab; }
    .title b { text-align: center; color: #aaa6a5; font-size: 25.5px; font-weight: 700; padding: 0 14px 2px 0; letter-spacing: .45px; }
    .bar { height: 78px; display: flex; align-items: center; flex: none; }
    .bar.first { height: 76px; padding-bottom: 2px; }
    .slot { width: 68px; display: flex; justify-content: center; flex: none; }
    .slot .ico { display: block; }
    .slot.active { height: 66px; align-items: center; border: 2px solid #fff; border-radius: 5px; margin: 0 1px; width: 66px; position: relative; top: 1px; }
    .off { opacity: .27; filter: saturate(.55); }
    .grip { display: flex; justify-content: flex-end; flex: none; }
    .grip i { width: 4px; height: 19px; border-radius: 2px; background: #a9a9a9; border: 1px solid #5a5a5a; }
    .arr { flex: none; display: flex; justify-content: center; fill: #aaa; padding-top: 2px; }
    .more { flex: none; text-align: right; font-size: 17px; font-weight: 400; letter-spacing: 0; color: #2c2c2c; }
    .ico { flex: none; overflow: visible; }
    .tri { display: block; flex: none; }
    .main { height: 967px; display: flex; flex: none; }
    .left { width: 344px; padding-right: 17px; }
    .dt { height: 38px; display: flex; align-items: center; justify-content: space-between; font-size: 21.5px; letter-spacing: .35px; }
    .dt span { flex: 1; text-align: center; }
    .close { margin-right: 4px; position: relative; top: -2px; }
    .browser .dt span { padding: 2px 26px 0 0; }
    .tb { display: flex; align-items: center; height: 63px; padding-left: 12px; gap: 20px; padding-bottom: 4px; }
    .box { border: 2px solid #383838; border-radius: 4px; background: #b2b2b2; overflow: hidden; }
    .tree { height: 329px; width: 326px; padding: 2px 3px 2px 2px; display: grid; grid-template-columns: 302px 16px; grid-template-rows: 306px 16px; }
    .rows { overflow: hidden; height: 306px; }
    .tr { height: 36px; display: flex; align-items: center; white-space: nowrap; padding-left: 11px; fill: #6c6c6c; letter-spacing: .65px; }
    .tr.d1 { padding-left: 43px; }
    .tr .tw { width: 10px; margin-right: 27px; display: flex; justify-content: center; }
    .tr .ico { margin-left: -10px; margin-right: 12px; }
    .sb { background: #373737; border-radius: 4px; padding: 2px; }
    .sb i { display: block; background: #727272; border-radius: 3px; height: 100%; }
    .layers .dt { height: 52px; padding-top: 14px; }
    .ltb { display: flex; align-items: center; height: 61px; padding: 0 7px 4px 4px; }
    .ltb .chk { width: 50px; height: 50px; border: 2px solid #fff; border-radius: 4px; display: flex; align-items: center; justify-content: center; margin-right: 12px; }
    .ltb .ico { margin-right: 20px; }
    .ltb .ico.nb { margin: 0 4px 0 0; }
    .ltb .m { position: relative; fill: #aaa; display: flex; }
    .ltb .m .tri { position: absolute; right: 15px; bottom: 2px; }
    .ltb .lone { fill: #aaa; margin: 4px 0 0 -5px; }
    .ltb .more { margin-left: auto; }
    .lbox { height: 424px; width: 327px; display: flex; flex-direction: column; padding: 2px 1px; }
    .lr { height: 44.100px; display: flex; align-items: center; white-space: nowrap; overflow: hidden; fill: #6c6c6c; letter-spacing: .7px; }
    .lr .tw { width: 12px; margin: 0 22px 0 13px; display: flex; }
    .lr.kid { padding-left: 87px; }
    .lr.sel { background: #f0f0f0; }
    .lr b { font-weight: 700; letter-spacing: 1px; }
    .check { width: 26px; height: 26px; border: 2px solid #333; border-radius: 7px; background: #b2b2b2; flex: none; display: flex; }
    .lr .ln { width: 32px; height: 2px; background: #b7cfe2; margin: 0 12px 0 14px; flex: none; }
    .lr .pt { width: 7px; height: 7px; border-radius: 50%; background: #c9a227; border: 1px solid #5a4a10; margin: 0 28px 0 26px; flex: none; }
    .lr .ico { margin: 0 12px 0 14px; }
    .u { text-decoration: underline; text-decoration-thickness: 2.500px; text-underline-offset: 4px; text-decoration-skip-ink: none; }
    .lbox .sb { margin-top: auto; height: 16px; flex: none; }
    map-canvas { margin-top: 5px; flex: none; }
    .right { width: 800px; margin-left: 24px; display: flex; flex-direction: column; }
    .right .dt span { padding: 2px 31px 0 0; }
    .right .dt .close { margin-right: 3px; }
    .combo { height: 48px; border: 2px solid #1f1f1f; border-radius: 6px; background: linear-gradient(#525252, #373737); color: #b6b6b6; fill: #c0c0c0; display: flex; align-items: center; white-space: nowrap; }
    .combo .tri { margin-left: auto; }
    .c1 { width: 794px; margin-top: 7px; padding: 0 8px 0 6px; }
    .c1 .ico { margin: 3px 12px 0 0; }
    .c2 { width: 696px; margin-left: 14px; padding: 0 9px 0 8px; }
    .c2 .ico { margin-right: 9px; }
    .body { display: flex; margin-top: 14px; }
    .side { width: 76px; height: 850px; background: #373737; border-radius: 3px; margin-left: 2px; padding: 4px; display: flex; flex-direction: column; flex: none; }
    .side span { height: 60px; display: flex; align-items: center; justify-content: center; }
    .side .sel { background: #f1f1f1; }
    .content { padding-top: 16px; width: 722px; display: flex; flex-direction: column; }
    .sym { display: flex; margin: 14px 0 0 18px; height: 224px; }
    .preview { width: 197px; margin-right: 13px; padding-top: 2px; display: flex; align-items: center; }
    .preview i { width: 100%; height: 2px; background: #3f7398; }
    .stree { width: 343px; padding: 2px 5px 2px 1px; margin-right: 12px; }
    .sr { height: 36px; display: flex; align-items: center; fill: #6c6c6c; }
    .sr.sel { background: #f0f0f0; font-weight: 700; padding-left: 15px; letter-spacing: .8px; }
    .sr.k { padding-left: 86px; }
    .sr i { width: 32px; height: 3px; background: #b3cbdf; margin: 0 12px 0 20px; }
    .sr.k i { background: #86a3bb; margin-left: 0; }
    .btns { display: grid; grid-template-columns: 56px 56px; grid-auto-rows: 48px; gap: 8px 12px; }
    .btn { border: 2px solid #383838; border-radius: 6px; display: flex; align-items: center; justify-content: center; }
    .btn.en { background: linear-gradient(#9f9f9f, #848484); }
    .scroll { margin: 32px 0 0 18px; display: grid; grid-template-columns: 672px 16px; grid-template-rows: 358px 16px; }
    .pane { overflow: hidden; height: 358px; padding-top: 4px; }
    .f { display: flex; align-items: center; width: 720px; padding-left: 12px; }
    .f label { width: 118px; flex: none; padding-top: 2px; }
    .cbtn { width: 640px; height: 56px; border: 2px solid #1f1f1f; border-radius: 6px; background: linear-gradient(#525252, #373737); padding: 10px 4px; flex: none; }
    .cbtn i { display: block; width: 530px; height: 32px; background: #1f78b4; }
    .spin { height: 48px; border: 2px solid #1f1f1f; border-radius: 6px; background: linear-gradient(#525252, #373737); color: #b6b6b6; fill: #b6b6b6; display: flex; align-items: center; justify-content: space-between; padding: 0 8px; letter-spacing: 1px; flex: none; }
    .spin em { display: flex; flex-direction: column; gap: 14px; }
    .slider { width: 284px; height: 20px; margin: -4px 8px 0 2px; display: flex; align-items: center; flex: none; }
    .slider i { flex: 1; height: 16px; background: #b2b2b2; border: 2px solid #383838; border-radius: 4px; margin-right: -4px; }
    .slider b { width: 46px; height: 20px; background: linear-gradient(90deg, #8c8c8c, #a4a4a4); border: 2px solid #383838; border-radius: 4px; }
    .f .ov { margin-left: 17px; }
    .search { width: 633px; height: 48px; border: 2px solid #333; border-radius: 6px; background: #b2b2b2; padding: 2px; display: flex; gap: 6px; margin-left: 2px; flex: none; }
    .search .in { width: 591px; height: 38px; margin: 2px 0 0 2px; border: 2px solid #333; border-radius: 6px; display: flex; align-items: center; padding: 0 16px; }
    .search .in .ico { margin-right: 17px; }
    .search .clr { margin-left: auto; }
    .dd { width: 27px; background: linear-gradient(#525252, #373737); border-radius: 3px; display: flex; align-items: center; justify-content: center; fill: #b6b6b6; }
    .srow { display: flex; align-items: center; width: 720px; margin-top: 26px; }
    .styles { margin: 12px 0 0 4px; width: 720px; height: 120px; padding: 0 12px; font-weight: 700; letter-spacing: 1.050px; }
    .styles div { height: 52px; padding-top: 21px; border-bottom: 2px solid #a8a8a8; white-space: nowrap; }
    .styles div + div { padding-top: 19px; }
    .lrend { display: flex; align-items: center; height: 26px; margin: 38px 0 0 24px; font-weight: 700; letter-spacing: 1px; }
    .lrend svg { margin-right: 19px; }
    .foot { display: flex; align-items: center; margin: 30px 0 0 8px; height: 50px; }
    .foot .btn { width: 50px; height: 50px; margin-right: 12px; }
    .foot .check { margin: 0 14px 0 302px; }
    .foot .btn.apply { width: 85px; height: 48px; margin: 0 0 2px 15px; letter-spacing: .6px; }
    .status { height: 56px; display: flex; padding: 6px 0 0 6px; font-size: 21.5px; letter-spacing: .4px; align-items: center; flex: none; white-space: nowrap; }
    .loc { width: 428px; height: 47px; display: flex; align-items: center; color: #555; font-size: 24.5px; padding-left: 15px; border-radius: 5px; letter-spacing: .6px; flex: none; }
    .loc .ico { margin-right: 19px; }
    .cut { overflow: hidden; display: flex; flex: none; letter-spacing: 0; }
    .coord { width: 236px; height: 44px; display: flex; align-items: center; justify-content: center; letter-spacing: 1.150px; flex: none; }
    .scale { width: 172px; height: 48px; display: flex; align-items: center; justify-content: space-between; padding: 2px 2px 2px 10px; letter-spacing: 1.200px; flex: none; }
    .scale .dd { height: 40px; }
    .status .spin { letter-spacing: .6px; }
    .g { display: flex; flex: none; }
    .note { position: absolute; border: 6px solid #ff2e6e; border-radius: 3px; pointer-events: none; }
    .n1 { left: 1294px; top: 713px; width: 707px; height: 79px; }
    .n2 { left: 1298px; top: 856px; width: 361px; height: 63px; }
    .n3 { left: 41px; top: 765px; width: 74px; height: 60px; border-radius: 50%; }
  `;

  private item([kind, v]: Item) {
    const w = `width:${v}px`;
    if (kind === "grip") return html`<span class="grip" style=${w}><i></i></span>`;
    if (kind === "arrow") return html`<span class="arr" style=${w}>${tri("down", 8, 8)}</span>`;
    if (kind === "more") return html`<span class="more" style=${w}>»</span>`;
    return html`<span class=${classMap({ slot: true, active: kind === "active" })}>${icon(String(v), 48, kind === "off" ? "off" : "")}</span>`;
  }

  private spin(text: string, width: number) {
    return html`<span class="spin" style="width:${width}px">${text}<em>${tri("up")}${tri("down")}</em></span>`;
  }

  render() {
    return html`
      <svg class="defs" width="0" height="0"><defs>
        <radialGradient id="lens" cx=".4" cy=".35"><stop offset="0" stop-color="#fafafa"/><stop offset="1" stop-color="#cfcfcd"/></radialGradient>
        <linearGradient id="paper"><stop offset=".2" stop-color="#c4c4c4"/><stop offset=".6" stop-color="#eee"/></linearGradient>
        <linearGradient id="vg" x2="1" y2="1"><stop offset="0" stop-color="#f2f6fb"/><stop offset="1" stop-color="#7fa6d6"/></linearGradient>
      </defs></svg>
      <div class="backdrop"><div class="window">
        <header class="title"><span class="lights"><i></i><i></i><i></i></span><b>*Untitled Project — QGIS</b></header>
        ${BARS.map((b, i) => html`<div class=${classMap({ bar: true, first: i === 0 })}>${b.map((x) => this.item(x))}</div>`)}
        <div class="main">
          <div class="left">${this.browser()}${this.layers()}</div>
          <map-canvas></map-canvas>
          ${this.styling()}
        </div>
        ${this.status()}
      </div></div>
      <div class="note n1"></div><div class="note n2"></div><div class="note n3"></div>`;
  }

  private browser() {
    return html`<section class="browser">
      <div class="dt"><span>Browser</span>${closeBtn}</div>
      <div class="tb">${["addsel", "refresh", "funnel", "collapse", "info"].map((n) => icon(n, 32))}</div>
      <div class="box tree">
        <div class="rows">${BROWSER.map(([d, s, ic, t]) => html`<div class="tr d${d}">
          <span class="tw">${s === "right" ? tri("right", 10, 10) : s === "down" ? tri("down", 10, 10) : null}</span>${icon(ic, 32)}<span>${t}</span></div>`)}</div>
        <div class="sb"><i style="height:104px"></i></div>
        <div class="sb"><i style="width:110px"></i></div>
      </div>
    </section>`;
  }

  private layers() {
    return html`<section class="browser layers">
      <div class="dt"><span>Layers</span>${closeBtn}</div>
      <div class="ltb"><span class="chk">${icon("brush", 29, "nb")}</span>${icon("addgroup", 32)}
        <span class="m">${icon("eye", 32)}${tri("down", 9, 8)}</span><span class="m">${icon("funnel", 32)}${tri("down", 9, 8)}</span>
        ${icon("epsfilter", 32)}<span class="lone">${tri("down", 9, 8)}</span><span class="more">»</span></div>
      <div class="box lbox">
        <div class="lr"><span class="tw">${tri("down", 12, 12)}</span>${check(true)}${icon("group", 32)}<span>sample_gps_tra</span></div>
        <div class="lr kid sel">${check(true)}<i class="ln"></i><b class="u">tracks</b></div>
        <div class="lr kid">${check(false)}<i class="pt"></i><b><i>track_point</i></b></div>
        <div class="lr"><span class="tw">${tri("down", 12, 12)}</span>${check(true)}${icon("checker", 32)}<b>Dark Matter [no</b></div>
        <div class="sb"><i style="width:234px"></i></div>
      </div>
    </section>`;
  }

  private styling() {
    return html`<section class="right">
      <div class="dt"><span>Layer Styling</span>${closeBtn}</div>
      <div class="combo c1">${icon("vlayer", 32)}tracks${tri("down")}</div>
      <div class="body">
        <nav class="side">${["brush", "label", "mask", "cube", "brushes", "history"].map((n, i) => html`<span class=${i ? "" : "sel"}>${icon(n, 46)}</span>`)}</nav>
        <div class="content">
          <div class="combo c2">${icon("singlesym", 32)}Single Symbol${tri("down")}</div>
          <div class="sym">
            <div class="preview"><i></i></div>
            <div class="box stree">
              <div class="sr sel">${tri("down", 11, 11)}<i></i>Line</div>
              <div class="sr k"><i></i>Simple Line</div>
            </div>
            <div class="btns">
              <span class="btn en">${icon("plus", 29)}</span><span class="btn">${icon("up", 29, "off")}</span>
              <span class="btn">${icon("minus", 30, "off")}</span><span class="btn">${icon("down", 29, "off")}</span>
              <span class="btn">${icon("dup", 32, "off")}</span><span class="btn">${icon("lockopen", 30, "off")}</span>
            </div>
          </div>
          <div class="scroll">
            <div class="pane">
              <div class="f"><label>Color</label><span class="cbtn"><i></i></span></div>
              <div class="f" style="margin-top:14px"><label>Opacity</label><span class="slider"><i></i><b></b></span>${this.spin("100.0 %", 200)}${icon("override", 34, "ov")}</div>
              <div class="f" style="margin-top:16px"><label>Width</label>${this.spin("0.20000", 218)}<span class="combo" style="width:264px;margin-left:12px;padding:0 9px 0 6px">Millimeters${tri("down")}</span>${icon("override", 34, "ov")}</div>
              <div class="srow"><span class="search"><span class="in">${icon("search", 27)}Favorites<svg class="clr" width="26" height="20" viewBox="0 0 26 20"><path d="M7 0h19v20H7L0 10z" fill="#8e8e8e"/><path d="M10 4.500l11 11M21 4.500l-11 11" stroke="#fff" stroke-width="2.400"/></svg></span><span class="dd">${tri("down")}</span></span>
                <svg width="48" height="32" viewBox="0 0 48 32" style="margin-left:21px;flex:none"><circle cx="8" cy="9" r="5.500" fill="#d0632f" stroke="#a34a1d"/><rect x="3" y="18" width="10" height="11" fill="#8aae8a" stroke="#5a8c5a" stroke-width="1.500"/></svg></div>
              <div class="box styles"><div>Project Styles</div><div>Default</div></div>
            </div>
            <div class="sb"><i style="height:228px"></i></div>
            <div class="sb"><i style="width:624px"></i></div>
          </div>
          <div class="lrend"><svg width="15" height="22" viewBox="0 0 15 22"><path d="M1 1.500L13.500 11 1 20.500z" fill="#5a5a5a" stroke="#1c1c1c" stroke-width="1.800"/></svg>Layer Rendering</div>
          <div class="foot"><span class="btn en">${icon("undo", 34)}</span><span class="btn en">${icon("redo", 34)}</span>
            ${check(true)}Live update<span class="btn en apply">Apply</span></div>
        </div>
      </div>
    </section>`;
  }

  private status() {
    return html`<footer class="status">
      <span class="box loc">${icon("search", 26)}Type to locate (⌘K)</span>
      <span class="cut" style="width:29px;margin:0 8px 0 69px">rdi</span>
      <span class="box coord">23.0251°,72.5165°</span>
      <span class="g" style="margin-left:7px">${icon("mouse", 32)}</span>
      <span class="cut" style="width:5px;margin:0 7px 0 31px">a</span>
      <span class="box scale">1:56745<span class="dd">${tri("down")}</span></span>
      <span class="g" style="margin:0 21px">${icon("lock", 30)}</span>
      <span class="cut" style="width:12px;margin:0 6px 0 0">n</span>
      ${this.spin("100%", 186)}
      <span class="cut" style="width:6px;margin:0 19px 0 20px;justify-content:flex-end">a</span>
      ${this.spin("0.0 °", 185)}
      <span class="g" style="margin:0 14px 0 14px">${check(true)}</span>Render
      <span class="g" style="margin:0 5px 0 27px">${icon("globewire", 27)}</span>EPSG:4326
      <span class="g" style="margin:0 0 0 46px">${icon("bubble", 31)}</span>
    </footer>`;
  }
}
